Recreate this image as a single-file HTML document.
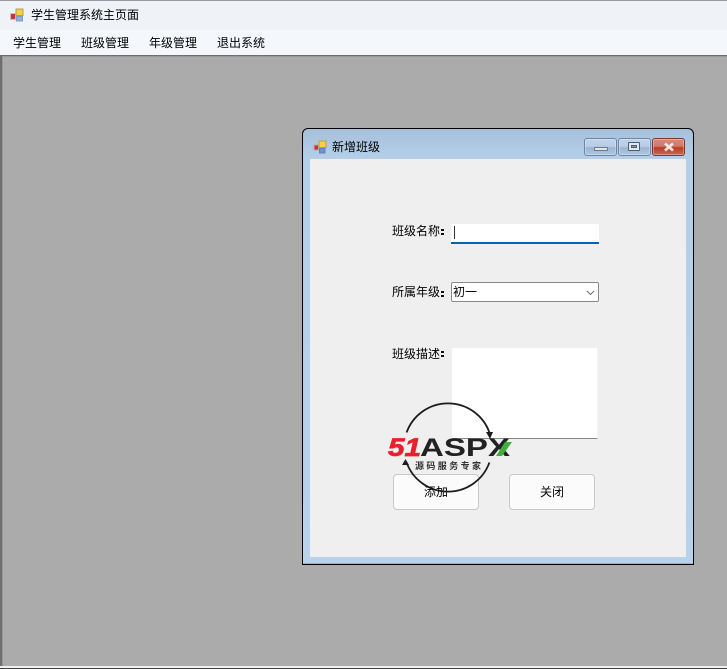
<!DOCTYPE html>
<html><head><meta charset="utf-8">
<style>
html,body{margin:0;padding:0;width:727px;height:669px;overflow:hidden;background:#ababab;font-family:"Liberation Sans","Noto Sans CJK SC",sans-serif;font-size:12px;color:#000}
div{position:absolute;box-sizing:border-box}
.t{white-space:nowrap;line-height:16px;height:16px}
.c{width:3px;height:2px;background:#111;box-shadow:0 4px 0 #111}
.btn{background:#fbfbfb;border:1px solid #c9c9c9;border-radius:4px;text-align:center;line-height:34px;width:86px;height:36px;top:474px}
.cap{top:138px;width:33px;height:18px;border:1px solid #6b87a6;border-radius:3px;background:linear-gradient(#bfd3e9 0,#b8cee6 45%,#9db5d0 55%,#afc6df 100%);box-shadow:inset 0 0 0 1px rgba(255,255,255,.3)}
</style></head><body>
<div style="left:0;top:0;width:727px;height:30px;background:#eff3f8;border-top:1px solid #9a9ea3"></div>
<div style="left:0;top:30px;width:727px;height:25px;background:#f4f7fb"></div>
<div style="left:0;top:55px;width:727px;height:1px;background:#6e6e6e"></div>
<div style="left:0;top:56px;width:727px;height:1px;background:#989898"></div>
<svg style="position:absolute;left:10px;top:8px" width="15" height="15" viewBox="0 0 15 15"><rect x="0.5" y="5.5" width="5" height="6" fill="#c8342c" stroke="#c4c4c4"/><rect x="6" y="1" width="7" height="6.5" fill="#f5d040" stroke="#b9a04a"/><rect x="6.5" y="8.5" width="6" height="4.5" fill="#8fb0df" stroke="#7f9cc9"/></svg>
<div class="t" style="left:31px;top:7px">学生管理系统主页面</div>
<div class="t" style="left:13px;top:35px">学生管理</div>
<div class="t" style="left:81px;top:35px">班级管理</div>
<div class="t" style="left:149px;top:35px">年级管理</div>
<div class="t" style="left:217px;top:35px">退出系统</div>
<div style="left:0;top:56px;width:2px;height:610px;background:#6e6e6e"></div>
<div style="left:2px;top:56px;width:1px;height:610px;background:#989898"></div>
<div style="left:0;top:666px;width:727px;height:2px;background:#f0f0f0"></div>
<div style="left:0;top:668px;width:727px;height:1px;background:#444"></div>

<div style="left:302px;top:128px;width:392px;height:437px;border:1px solid #000;border-radius:6px 6px 0 0;background:linear-gradient(#a6bfdb 0,#b6cfe9 30px,#b9d1ea 100%);overflow:hidden">
<div style="left:0;bottom:0;width:390px;height:1px;background:#6fc4dc"></div>
</div>
<svg style="position:absolute;left:313px;top:140px" width="15" height="14" viewBox="0 0 15 14"><rect x="1" y="5" width="4.5" height="5" fill="#c8342c" stroke="#b9a9a9"/><rect x="6" y="1" width="7" height="6.5" fill="#f5d040" stroke="#b9a04a"/><rect x="6.5" y="8.5" width="5.5" height="4.5" fill="#6f93cf" stroke="#5f83bf"/></svg>
<div class="t" style="left:332px;top:139px">新增班级</div>
<div class="cap" style="left:584px"><div style="left:9px;top:8px;width:14px;height:4px;background:#e8e4e4;border:1px solid #6a7a8c;border-radius:1px"></div></div>
<div class="cap" style="left:618px"><div style="left:9px;top:3px;width:12px;height:9px;background:#dfe6ee;border:1px solid #4d5d70;border-radius:1px"><div style="left:2px;top:2px;width:6px;height:3px;background:#7d94ae;border:1px solid #4d5d70"></div></div></div>
<div class="cap" style="left:652px;border-color:#7a3a34;background:linear-gradient(#d98a78 0,#d0796a 45%,#b93c28 55%,#cc6a50 100%)"><svg style="position:absolute;left:9px;top:2px" width="14" height="12" viewBox="0 0 14 12"><path d="M3 2.5L11 9.5M11 2.5L3 9.5" stroke="#f2e8e4" stroke-width="2.6"/></svg></div>

<div style="left:310px;top:159px;width:376px;height:398px;background:#efefef"></div>
<div class="t" style="left:392px;top:223px">班级名称</div>
<div class="c" style="left:441px;top:229px"></div>
<div style="left:451px;top:224px;width:148px;height:20px;background:#fff;border-bottom:2px solid #0a60ab"></div>
<div style="left:454px;top:226px;width:1px;height:13px;background:#333"></div>
<div class="t" style="left:392px;top:284px">所属年级</div>
<div class="c" style="left:441px;top:291px"></div>
<div style="left:451px;top:282px;width:148px;height:20px;background:#fff;border:1px solid #8a8a8a;border-radius:2px"></div>
<div class="t" style="left:453px;top:284px">初一</div>
<svg style="position:absolute;left:585px;top:288px" width="12" height="10" viewBox="0 0 12 10"><path d="M2 3L5.5 6.5L9 3" fill="none" stroke="#707070" stroke-width="1"/></svg>
<div class="t" style="left:392px;top:346px">班级描述</div>
<div class="c" style="left:441px;top:351px"></div>
<div style="left:452px;top:348px;width:146px;height:91px;background:#fff;border-bottom:1px solid #8a8a8a;border-right:1px solid #f4f4f4"></div>
<div class="btn" style="left:393px">添加</div>
<div class="btn" style="left:509px">关闭</div>

<svg style="position:absolute;left:380px;top:395px" width="140" height="105" viewBox="0 0 140 105">
<path d="M26.6 37.5A44 44 0 0 1 109.4 37.5" fill="none" stroke="#1c1c1c" stroke-width="1.8"/>
<path d="M106 37L113 37L110 44Z" fill="#1c1c1c"/>
<path d="M109.4 67.5A44 44 0 0 1 26.6 67.5" fill="none" stroke="#1c1c1c" stroke-width="1.8"/>
<path d="M22 70L29 70L25.5 64Z" fill="#1c1c1c"/>
<text x="8" y="61" font-family="Liberation Sans" font-weight="700" font-style="italic" font-size="25" fill="#e8202c" stroke="#e8202c" stroke-width=".7" textLength="33" lengthAdjust="spacingAndGlyphs">51</text>
<text x="40" y="61" font-family="Liberation Sans" font-weight="700" font-size="25" fill="#222" textLength="90" lengthAdjust="spacingAndGlyphs">ASPX</text>
<path d="M116 61L122 61L132 47L125 47Z" fill="#3fae3a"/>
<text x="35" y="74" font-family="Liberation Sans,Noto Sans CJK SC,sans-serif" font-size="9" font-weight="700" fill="#333" textLength="66">源码服务专家</text>
</svg>
</body></html>
